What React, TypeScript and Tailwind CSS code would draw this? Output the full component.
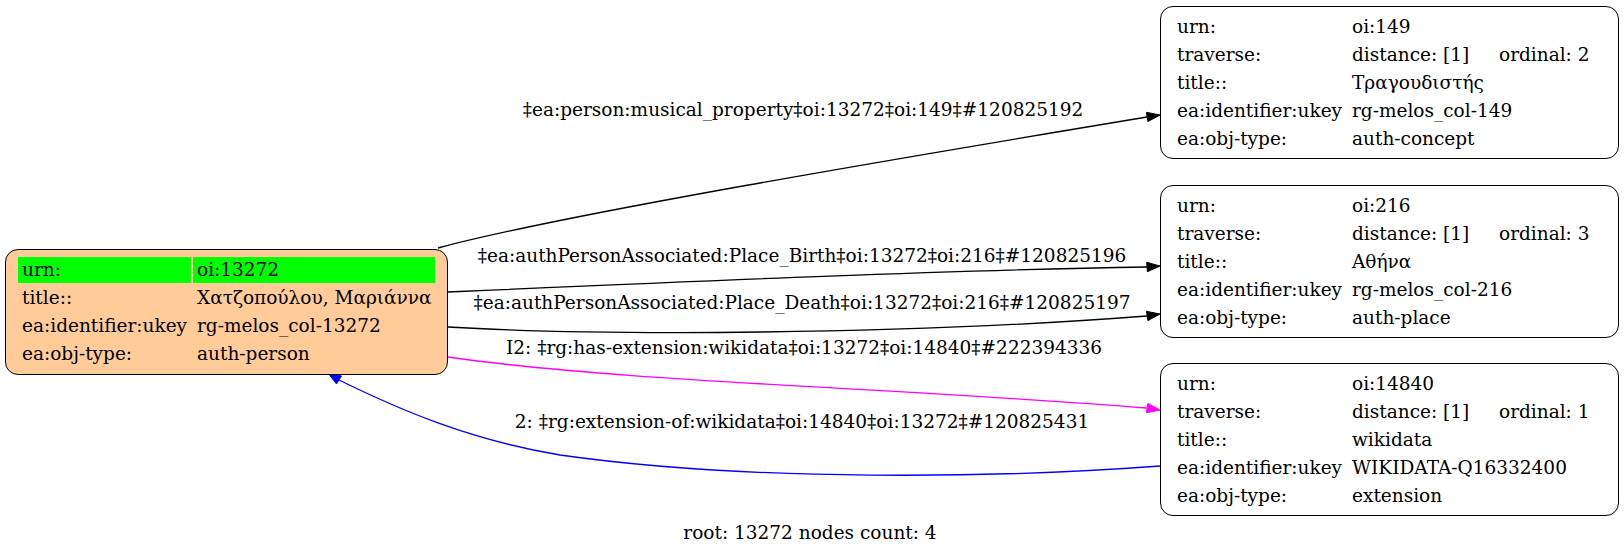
import React from "react";

type Row = { label: string; value: string; ordinal?: string; highlight?: boolean };

const rootRows: Row[] = [
  { label: "urn:", value: "oi:13272", highlight: true },
  { label: "title::", value: "Χατζοπούλου, Μαριάννα" },
  { label: "ea:identifier:ukey", value: "rg-melos_col-13272" },
  { label: "ea:obj-type:", value: "auth-person" },
];

const targets: { top: string; rows: Row[] }[] = [
  {
    top: "top-[6px]",
    rows: [
      { label: "urn:", value: "oi:149" },
      { label: "traverse:", value: "distance: [1]", ordinal: "ordinal: 2" },
      { label: "title::", value: "Τραγουδιστής" },
      { label: "ea:identifier:ukey", value: "rg-melos_col-149" },
      { label: "ea:obj-type:", value: "auth-concept" },
    ],
  },
  {
    top: "top-[185px]",
    rows: [
      { label: "urn:", value: "oi:216" },
      { label: "traverse:", value: "distance: [1]", ordinal: "ordinal: 3" },
      { label: "title::", value: "Αθήνα" },
      { label: "ea:identifier:ukey", value: "rg-melos_col-216" },
      { label: "ea:obj-type:", value: "auth-place" },
    ],
  },
  {
    top: "top-[363px]",
    rows: [
      { label: "urn:", value: "oi:14840" },
      { label: "traverse:", value: "distance: [1]", ordinal: "ordinal: 1" },
      { label: "title::", value: "wikidata" },
      { label: "ea:identifier:ukey", value: "WIKIDATA-Q16332400" },
      { label: "ea:obj-type:", value: "extension" },
    ],
  },
];

// filled graphviz-style arrowhead, tip at (tx,ty), coming from (fx,fy)
function arrowHead(fx: number, fy: number, tx: number, ty: number) {
  const dx = tx - fx;
  const dy = ty - fy;
  const len = Math.hypot(dx, dy);
  const ux = dx / len;
  const uy = dy / len;
  const bx = tx - ux * 13;
  const by = ty - uy * 13;
  const w = 4.7;
  return `${tx},${ty} ${bx - uy * w},${by + ux * w} ${bx + uy * w},${by - ux * w}`;
}

function Edges() {
  return (
    <svg className="absolute inset-0" width={1624} height={553} viewBox="0 0 1624 553" fill="none">
      <path d="M438,248 C560,215 900,158 1147,117" stroke="#000" strokeWidth={1.3} />
      <polygon points={arrowHead(1147, 117, 1160, 115)} fill="#000" stroke="#000" />

      <path d="M448,292 C700,281 950,270 1147,267" stroke="#000" strokeWidth={1.3} />
      <polygon points={arrowHead(1147, 267, 1160, 266)} fill="#000" stroke="#000" />

      <path d="M448,327 C600,336 900,335 1147,316" stroke="#000" strokeWidth={1.3} />
      <polygon points={arrowHead(1147, 316, 1160, 314)} fill="#000" stroke="#000" />

      <path d="M448,357 C620,382 900,388 1147,408" stroke="#ff00ff" strokeWidth={1.3} />
      <polygon points={arrowHead(1147, 408, 1160, 410)} fill="#ff00ff" stroke="#ff00ff" />

      <path d="M1160,466 C1000,478 750,482 560,455 C470,440 400,410 339,380" stroke="#0000ff" strokeWidth={1.3} />
      <polygon points={arrowHead(339, 380, 328, 373)} fill="#0000ff" stroke="#0000ff" />
    </svg>
  );
}

function EdgeLabel({ pos, text }: { pos: string; text: string }) {
  return (
    <div className={`absolute ${pos} -translate-x-1/2 whitespace-nowrap leading-[26px]`}>{text}</div>
  );
}

function RootNode() {
  return (
    <div className="absolute left-[5px] top-[249px] w-[443px] rounded-[13px] border border-black bg-[#ffcc99] px-[12px] py-[7px]">
      <div className="grid grid-cols-[173px_242px] gap-[2px]">
        {rootRows.map((r) => (
          <React.Fragment key={r.label}>
            <div className={`h-[26px] px-[4px] leading-[26px] whitespace-nowrap ${r.highlight ? "bg-[#00ff00]" : ""}`}>
              {r.label}
            </div>
            <div className={`h-[26px] px-[4px] leading-[26px] whitespace-nowrap ${r.highlight ? "bg-[#00ff00]" : ""}`}>
              {r.value}
            </div>
          </React.Fragment>
        ))}
      </div>
    </div>
  );
}

function TargetNode({ top, rows }: { top: string; rows: Row[] }) {
  return (
    <div className={`absolute left-[1160px] ${top} w-[459px] rounded-[13px] border border-black bg-white px-[12px] pt-[7px] pb-[6px]`}>
      <div className="grid grid-cols-[173px_145px_111px] gap-[2px]">
        {rows.map((r) => (
          <React.Fragment key={r.label}>
            <div className="h-[26px] px-[4px] leading-[26px] whitespace-nowrap">{r.label}</div>
            {r.ordinal ? (
              <>
                <div className="h-[26px] px-[4px] leading-[26px] whitespace-nowrap">{r.value}</div>
                <div className="h-[26px] px-[4px] leading-[26px] whitespace-nowrap">{r.ordinal}</div>
              </>
            ) : (
              <div className="col-span-2 h-[26px] px-[4px] leading-[26px] whitespace-nowrap">{r.value}</div>
            )}
          </React.Fragment>
        ))}
      </div>
    </div>
  );
}

export default function App() {
  return (
    <div className="relative h-[553px] w-[1624px] overflow-hidden bg-white text-[18.5px] text-black [font-family:'DejaVu_Serif',serif]">
      <Edges />

      <EdgeLabel pos="left-[803px] top-[97px]" text="‡ea:person:musical_property‡oi:13272‡oi:149‡#120825192" />
      <EdgeLabel pos="left-[802px] top-[243px]" text="‡ea:authPersonAssociated:Place_Birth‡oi:13272‡oi:216‡#120825196" />
      <EdgeLabel pos="left-[802px] top-[290px]" text="‡ea:authPersonAssociated:Place_Death‡oi:13272‡oi:216‡#120825197" />
      <EdgeLabel pos="left-[804px] top-[335px]" text="I2: ‡rg:has-extension:wikidata‡oi:13272‡oi:14840‡#222394336" />
      <EdgeLabel pos="left-[802px] top-[409px]" text="2: ‡rg:extension-of:wikidata‡oi:14840‡oi:13272‡#120825431" />

      <RootNode />
      {targets.map((t) => (
        <TargetNode key={t.top} top={t.top} rows={t.rows} />
      ))}

      <EdgeLabel pos="left-[810px] top-[520px]" text="root: 13272 nodes count: 4" />
    </div>
  );
}
